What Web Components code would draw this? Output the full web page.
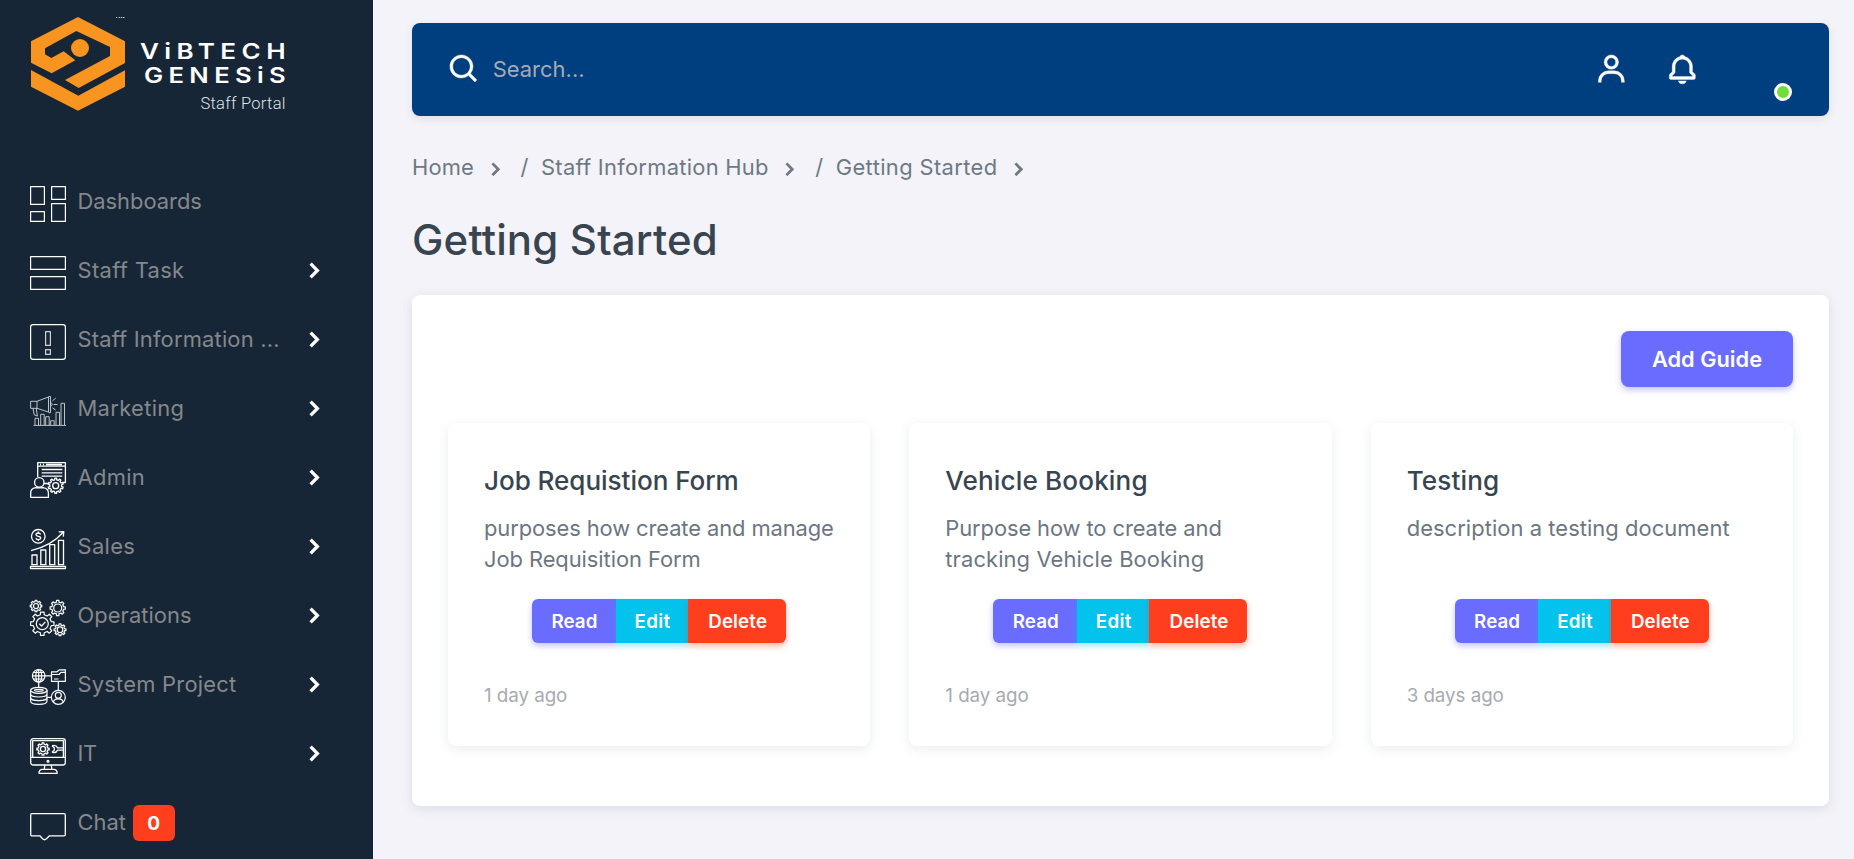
<!DOCTYPE html>
<html lang="en"><head><meta charset="utf-8"><title>Getting Started</title>
<style>
html,body{margin:0;height:100%;overflow:hidden}
body{background:#f4f3f9;font-family:Inter,"Open Sans",sans-serif;font-size:21.9px;color:#697a8d}
</style></head><body>
<staff-app></staff-app>
<script>
// Text run with its own tracking, in px
const t=(s,ls=0)=>`<span style="letter-spacing:${ls-.06}px">${s}</span>`;
const define=(name,render)=>customElements.define(name,class extends HTMLElement{
  connectedCallback(){
    if(this.shadowRoot)return;
    this.attachShadow({mode:'open'}).innerHTML='<style>*{box-sizing:border-box}svg{display:block;flex:none}span{white-space:nowrap}</style>'+render(this);
  }
});
// Gear outline: n teeth around (x,y), outer radius r
const gear=(x,y,r,n=8)=>{
  const p=[],ri=r*.78,step=Math.PI*2/n;
  for(let i=0;i<n;i++)for(const [a,q] of [[-.27,ri],[-.19,r],[.19,r],[.27,ri]]){
    const th=i*step+a*step;p.push((x+q*Math.sin(th)).toFixed(2)+' '+(y-q*Math.cos(th)).toFixed(2));
  }
  return `<path d="M${p.join('L')}z"/>`;
};
const bars=a=>a.map(([x,y,w,b])=>`<path d="M${x} ${b}V${y}h${w}V${b}"/>`).join('');
const icons={
  dashboards:`<g stroke-width="1.2"><rect x=".6" y=".6" width="13.8" height="17.8"/><rect x="21.6" y=".6" width="13.8" height="12.8"/><rect x=".6" y="25.6" width="13.8" height="9.8"/><rect x="21.6" y="17.6" width="13.8" height="17.8"/></g>`,
  task:`<g stroke-width="1.2"><rect x=".6" y="1.6" width="34.8" height="12.8"/><rect x=".6" y="21.6" width="34.8" height="12.8"/></g>`,
  info:`<g stroke-width="1.2"><rect x=".6" y=".6" width="34.8" height="34.8" rx="2.4"/><g opacity=".8"><rect x="15.6" y="7.6" width="4.8" height="13.8"/><rect x="15.6" y="25.6" width="4.8" height="4.8"/></g></g>`,
  marketing:`<g stroke-width=".9" opacity=".8"><path d="M.6 8.3H7V15.3H.6zM7 8.3 18.5 4V19L7 15.3M18.5 3.5h2v16.2h-2M3 15.3l1.2 6.5 3.2 1.3L6.2 15.3M20.5 9.5c2 .3 2 3.4 0 3.7M22.5 7.8l3.2-2.6M23.5 11.5h4M22.5 14.8l3.2 2.3"/>${bars([[5,25.3,3.5,32],[10.7,21.3,3.5,32],[15.7,23.7,3.5,32],[20.7,27.7,3.5,32],[26,19.3,3.5,32],[31,10.3,3.5,32]])}<path d="M3.5 32.4H36"/></g>`,
  admin:`<g stroke-width="1.3"><path d="M7.7 15V.7H35.4V20.5H33M7.7 4.2H35.4M10 2.5h1M13 2.5h1M16 2.5h16M11.7 7.5H32.3M11.7 10.9H32.3M11.7 14.2H32.3M14 21.5H18.4"/><circle cx="9.3" cy="20.4" r="4.7"/><path d="M.7 35.3V30.5Q.7 26.6 5.5 25.6L9.3 25.9 13.2 25.6Q18.4 26.5 18.4 31V35.3z"/>${gear(25.7,23.7,7.6,10)}<circle cx="25.7" cy="23.7" r="3"/></g>`,
  sales:`<g stroke-width="1.3"><circle cx="8.3" cy="5.3" r="6.8"/><path d="M10.6 3.4Q10 2 8.3 2 5.9 2.2 6 3.8 6.1 5.1 8.3 5.3 10.7 5.6 10.7 7 10.5 8.7 8.3 8.7 6.3 8.6 5.9 7.1M8.3 .6V2M8.3 8.7V10"/><path d="M1 19.6Q21 15 33.2 1.2M28.7 .9 33.8.6 33.3 5.6"/>${bars([[2,24,5,33.8],[10.8,19,5,33.8],[19.7,13.7,5,33.8],[28.5,9.3,5,33.8]])}<path d="M1.4 33.6H7.6M10.2 33.6H16.4M19.1 33.6H25.3M27.9 33.6H34.1"/><rect x=".5" y="35.5" width="35" height="2.1"/></g>`,
  operations:`<g stroke-width="1.2">${gear(6,6,5.8)}<circle cx="6" cy="6" r="2.5"/>${gear(27.7,8,7.7)}<circle cx="27.7" cy="8" r="4"/>${gear(12.3,23.7,11.8)}<circle cx="12.3" cy="23.7" r="6"/><path d="M9.3 23.8 11.6 26 15.4 21.8"/>${gear(30,29.7,6)}<circle cx="30" cy="29.7" r="2.8"/></g>`,
  system:`<g stroke-width="1.2"><circle cx="8.7" cy="6.8" r="6.3"/><ellipse cx="8.7" cy="6.8" rx="2.9" ry="6.3"/><path d="M2.4 6.8H21.3M3.4 3.5H14M3.4 10H14M8.7.5V18M28.3 12.5V21M17.3 28.3H21M21.5 12.3V2.8H27L29.5.8H35.4V12.3zM22 5.5H29L31 3.3H35M24 10h4.5"/><ellipse cx="8.8" cy="21.3" rx="8.2" ry="3"/><ellipse cx="8.8" cy="21.3" rx="4.5" ry="1"/><path d="M.6 21.3V32.3C.8 36.4 16.8 36.4 17 32.3V21.3M.6 25C.8 29 16.8 29 17 25M.6 28.6C.8 32.6 16.8 32.6 17 28.6"/><circle cx="28.3" cy="28.3" r="7"/><circle cx="28.3" cy="26.3" r="3"/><path d="M23.4 33.2Q23.8 29.8 28.3 29.8 32.8 29.8 33.2 33.2"/></g>`,
  it:`<g stroke-width="1.3"><rect x=".7" y=".7" width="34.6" height="26.3" rx="2.5"/><path d="M2.7 19.2V2.7H33.4V19.2M.7 19.4H35.3M14.8 27 14.3 31.2M21.3 27 21.8 31.2M9 35.3Q9 31.3 12.5 31.3H23.7Q27.2 31.3 27.2 35.3z"/><circle cx="18" cy="23.3" r=".9"/>${gear(13,11,6.2)}<circle cx="13" cy="11" r="2.6"/><path d="M22 7.8Q26 6.5 27.6 9.9H33M22 14.2Q26 15.5 27.6 12.1H33M22 7.8 24.3 9.8V12.2L22 14.2"/></g>`,
  chat:`<path stroke-width="1.3" d="M2 6.7H34Q35.3 6.7 35.3 8V27.5Q35.3 28.8 34 28.8H19.5L16.5 31.8Q14.5 33.6 12.6 31.8L9.8 28.8H2Q.7 28.8.7 27.5V8Q.7 6.7 2 6.7z"/>`
};
define('nav-icon',e=>`<style>:host{display:block;width:36px;height:36px}svg{overflow:visible}</style><svg width="36" height="36" viewBox="0 0 36 36" fill="none" stroke="#fff" stroke-linejoin="round">${icons[e.getAttribute('name')]}</svg>`);
define('chevron-right',()=>`<style>:host{display:block;width:11px;height:17px}svg{width:100%;height:100%}</style><svg viewBox="0 0 11 17" fill="none" stroke="currentColor" stroke-width="3.3"><path d="M1.6 1.6 8.4 8.5 1.6 15.4"/></svg>`);
define('nav-item',e=>{const a=n=>e.getAttribute(n);return `<style>
:host{display:flex;align-items:center;height:69px;padding:0 53px 0 30px;color:#85888b}
nav-icon{margin:6px 11.5px 0 0}chevron-right{margin-left:auto;color:#fff}</style>
<nav-icon name="${a('icon')}"></nav-icon>${t(a('label'),a('track')||0)}<slot></slot>${e.hasAttribute('more')?'<chevron-right></chevron-right>':''}`});
define('count-badge',()=>`<style>:host{display:flex;align-items:center;justify-content:center;width:42px;height:36px;margin:2px 0 0 6.5px;border-radius:6px;background:#ff3e1d;color:#fff;font-size:19px;font-weight:700}</style><slot></slot>`);
define('brand-logo',()=>`<style>:host{display:block;height:166.5px}</style>
<svg width="373" height="130" viewBox="0 0 373 130">
<g fill="#f89420"><path transform="scale(.33333)" d="M234 51 375 124V189L236 264 195 240 330 168V141L229 93 135 145V163L154 174 191 154 226 181 155 220 93 188V124zM93 210 235 287 375 211V260L234 332 93 260z"/><circle cx="80" cy="48" r="9"/></g>
<path d="M116 17.5h1.2m1.4 0h1.4m.6 0h1.4m.6 0h2" stroke="#b9c0c6" stroke-width="1.2"/>
<g fill="#fff" font-family="Inter,sans-serif" font-weight="600" font-size="21.5">
<text x="140" y="59" textLength="151" lengthAdjust="spacingAndGlyphs" letter-spacing="4.5">ViBTECH</text>
<text x="144" y="83" textLength="147" lengthAdjust="spacingAndGlyphs" letter-spacing="4.5">GENESiS</text></g>
<text x="200.5" y="109" fill="#dfe3e6" font-family="Roboto,sans-serif" font-weight="300" font-size="16.5" textLength="85">Staff Portal</text></svg>`);
define('side-bar',()=>`<style>:host{display:block;width:373px;height:859px;background:#172636;overflow:hidden}</style><brand-logo></brand-logo>
<nav-item icon="dashboards" label="Dashboards" track=".05"></nav-item>
<nav-item icon="task" label="Staff Task" track=".4" more></nav-item>
<nav-item icon="info" label="Staff Information ..." track=".25" more></nav-item>
<nav-item icon="marketing" label="Marketing" track=".4" more></nav-item>
<nav-item icon="admin" label="Admin" track=".4" more></nav-item>
<nav-item icon="sales" label="Sales" track=".4" more></nav-item>
<nav-item icon="operations" label="Operations" track=".12" more></nav-item>
<nav-item icon="system" label="System Project" track=".3" more></nav-item>
<nav-item icon="it" label="IT" track="-.3" more></nav-item>
<nav-item icon="chat" label="Chat" track=".1"><count-badge>0</count-badge></nav-item>`);
define('top-bar',()=>`<style>:host{display:flex;align-items:center;height:93px;border-radius:8px;background:#003f7f;box-shadow:0 3px 9px rgba(67,89,113,.12);padding:0 37px 0 35px;color:#a5abb2}
.search{display:flex;align-items:center;gap:11px;flex:1}.search span{margin-top:-2px}.actions{display:flex;align-items:center;gap:36px;color:#fff}
.actions svg,.search svg{margin-top:-1px}
.avatar{width:56.5px;height:60px;display:flex;align-items:flex-end;justify-content:flex-end}
.dot{width:18px;height:18px;border-radius:50%;background:#71dd37;border:3px solid #fff;margin-bottom:-1px}</style>
<div class="search"><svg width="34.7" height="34.7" viewBox="0 0 24 24" fill="#fff" stroke="#fff" stroke-width=".25"><path d="M10 18a7.952 7.952 0 0 0 4.897-1.688l4.396 4.396 1.414-1.414-4.396-4.396A7.952 7.952 0 0 0 18 10c0-4.411-3.589-8-8-8s-8 3.589-8 8 3.589 8 8 8zm0-14c3.309 0 6 2.691 6 6s-2.691 6-6 6-6-2.691-6-6 2.691-6 6-6z"/></svg>${t('Search...',.1)}</div>
<div class="actions"><svg width="34.7" height="34.7" viewBox="0 0 24 24" fill="currentColor" stroke="#fff" stroke-width=".25"><path d="M12 2a5 5 0 1 0 5 5 5 5 0 0 0-5-5zm0 8a3 3 0 1 1 3-3 3 3 0 0 1-3 3zm9 11v-1a7 7 0 0 0-7-7h-4a7 7 0 0 0-7 7v1h2v-1a5 5 0 0 1 5-5h4a5 5 0 0 1 5 5v1z"/></svg>
<svg width="34.7" height="34.7" viewBox="0 0 24 24" fill="currentColor" stroke="#fff" stroke-width=".25"><path d="M19 13.586V10c0-3.217-2.185-5.927-5.145-6.742C13.562 2.52 12.846 2 12 2s-1.562.52-1.855 1.258C7.185 4.074 5 6.783 5 10v3.586l-1.707 1.707A.996.996 0 0 0 3 16v2a1 1 0 0 0 1 1h16a1 1 0 0 0 1-1v-2a.996.996 0 0 0-.293-.707L19 13.586zM19 17H5v-.586l1.707-1.707A.996.996 0 0 0 7 14v-4c0-2.757 2.243-5 5-5s5 2.243 5 5v4c0 .266.105.52.293.707L19 16.414V17zm-7 5a2.98 2.98 0 0 0 2.818-2H9.182A2.98 2.98 0 0 0 12 22z"/></svg>
<div class="avatar"><div class="dot"></div></div></div>`);
define('bread-crumbs',()=>`<style>:host{display:flex;align-items:center;height:34px;color:#6d7984}
chevron-right{width:9.5px;height:14.5px;margin:4px 20.5px 0 16.5px}.s{width:20.5px}</style>
${t('Home',.23)}<chevron-right></chevron-right><span class="s">/</span>${t('Staff Information Hub',.34)}<chevron-right></chevron-right><span class="s">/</span>${t('Getting Started',.44)}<chevron-right></chevron-right>`);
define('guide-card',e=>{const a=n=>e.getAttribute(n),l=a('lines').split('|').map(s=>s.split('~')),h=a('heading').split('~');return `<style>
:host{display:flex;flex-direction:column;height:323px;border-radius:8px;padding:43px 36px 0;background:#fff;box-shadow:0 3px 12px rgba(67,89,113,.11)}
h5{margin:0;font-size:26.1px;font-weight:450;line-height:30px;color:#384551}
p{margin:17px 0 0;height:62px;line-height:31px;color:#6b7682}p span{display:block}
.group{display:flex;align-self:center;height:44px;margin-top:24px;color:#fff}
button{border:0;padding:0 0 0 1px;margin:0;height:44px;font:600 18.8px Inter,sans-serif;color:#fff}
.r{width:83.5px;background:#696cff;border-radius:6px 0 0 6px;box-shadow:0 3px 6px rgba(105,108,255,.4)}
.e{width:72.5px;background:#03c3ec;box-shadow:0 3px 6px rgba(3,195,236,.4)}
.d{width:98px;background:#ff3e1d;border-radius:0 6px 6px 0;box-shadow:0 3px 6px rgba(255,62,29,.4)}
small{font-size:18.8px;line-height:26px;margin-top:40px;color:#a7abb0}</style>
<h5>${t(...h)}</h5><p>${l.map(x=>t(...x)).join('')}</p>
<div class="group"><button class="r">${t('Read',.1)}</button><button class="e">${t('Edit',.35)}</button><button class="d">${t('Delete',.17)}</button></div>
<small>${t(a('time'),0)}</small>`});
define('guide-panel',()=>`<style>:host{display:block;height:511px;border-radius:8px;background:#fff;box-shadow:0 3px 12px rgba(67,89,113,.14);padding:36px}
.bar{display:flex;justify-content:flex-end;margin-bottom:36px}
.add{border:0;padding:0;width:172px;height:56px;border-radius:8px;background:#696cff;color:#fff;font:600 21.8px Inter,sans-serif;box-shadow:0 3px 6px rgba(105,108,255,.4)}
.grid{display:grid;grid-template-columns:repeat(3,1fr);gap:39px}</style>
<div class="bar"><button class="add">${t('Add Guide',.06)}</button></div>
<div class="grid">
<guide-card heading="Job Requistion Form~0" lines="purposes how create and manage~-.03|Job Requisition Form~0" time="1 day ago"></guide-card>
<guide-card heading="Vehicle Booking~.2" lines="Purpose how to create and~-.03|tracking Vehicle Booking~.18" time="1 day ago"></guide-card>
<guide-card heading="Testing~.2" lines="description a testing document~.13" time="3 days ago"></guide-card></div>`);
define('staff-app',()=>`<style>:host{display:grid;grid-template-columns:373px 1fr;height:859px}
main{padding:23px 25px 0 39px}bread-crumbs{margin-top:34px}
h4{margin:32px 0 0;font-size:42px;font-weight:500;line-height:48px;height:79px;color:#384551}</style>
<side-bar></side-bar><main><top-bar></top-bar><bread-crumbs></bread-crumbs><h4>${t('Getting Started',.22)}</h4><guide-panel></guide-panel></main>`);
</script></body></html>
